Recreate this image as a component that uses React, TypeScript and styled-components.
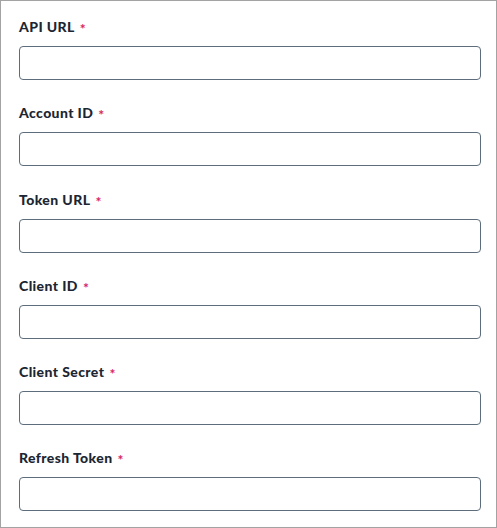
import React from "react";
import styled, { createGlobalStyle } from "styled-components";

const Global = createGlobalStyle`
  html, body { margin: 0; padding: 0; background: #ffffff; }
  * { box-sizing: border-box; }
`;

const Panel = styled.div`
  width: 497px;
  height: 528px;
  border: 1px solid #a3a3a3;
  background: #ffffff;
  padding: 15px 15px 0 18px;
  display: flex;
  flex-direction: column;
  gap: 22.25px;
  font-family: Lato, "Noto Sans", sans-serif;
  overflow: hidden;
`;

const Field = styled.div`
  display: flex;
  flex-direction: column;
  gap: 9px;
`;

const Label = styled.label`
  font-size: 14px;
  line-height: 21px;
  font-weight: 900;
  letter-spacing: 0.4px;
  color: #1c2633;
  display: flex;
  align-items: center;
  gap: 5px;
`;

const Required = styled.span`
  display: inline-block;
  color: #d6245f;
  font-size: 14px;
  line-height: 14px;
  font-weight: 700;
  letter-spacing: 0;
  padding-top: 5px;
`;

const Input = styled.input`
  height: 34px;
  width: 100%;
  border: 1px solid #5d6d7c;
  border-radius: 4px;
  padding: 0 10px;
  font-family: inherit;
  font-size: 14px;
  background: #ffffff;
  outline: none;
`;

const fields = ["API URL", "Account ID", "Token URL", "Client ID", "Client Secret", "Refresh Token"];

export default function App() {
  return (
    <>
      <Global />
      <Panel>
        {fields.map((f) => (
          <Field key={f}>
            <Label>
              {f}
              <Required>*</Required>
            </Label>
            <Input type="text" />
          </Field>
        ))}
      </Panel>
    </>
  );
}
